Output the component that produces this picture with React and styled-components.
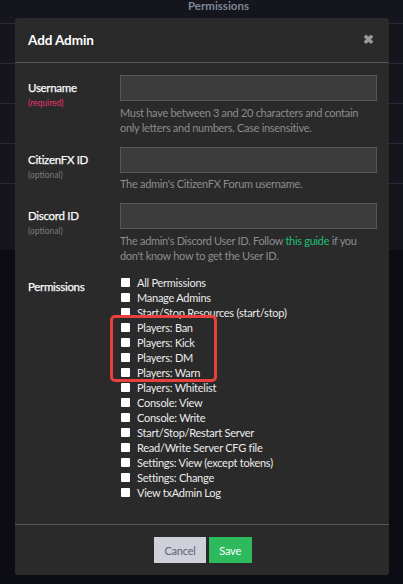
import React from "react";
import styled, { createGlobalStyle } from "styled-components";

const GlobalStyle = createGlobalStyle`
  html, body {
    margin: 0;
    padding: 0;
    background: #0c0c14;
    font-family: Lato, "Open Sans", sans-serif;
  }
`;

const Page = styled.div`
  position: relative;
  width: 403px;
  height: 584px;
  overflow: hidden;
  background: #0c0c14;
`;

const Table = styled.div`
  background: #15151e;
  height: 250px;
`;

const TableHead = styled.div`
  height: 24px;
  display: flex;
  justify-content: center;
  padding-left: 34px;
  color: #7d8797;
  font-size: 11.5px;
  font-weight: 700;
  line-height: 12px;
  border-bottom: 1px solid #2b2b36;
  box-sizing: border-box;
`;

const TableRow = styled.div`
  height: 40px;
  border-bottom: 1px solid #2b2b36;
  box-sizing: border-box;
`;

const Modal = styled.div`
  position: absolute;
  top: 18px;
  left: 15px;
  width: 374px;
  height: 557px;
  background: #2a2a2a;
  border-radius: 3px;
  display: flex;
  flex-direction: column;
  box-sizing: border-box;
  color: #e6e6e6;
`;

const Header = styled.div`
  height: 45px;
  display: flex;
  align-items: center;
  justify-content: space-between;
  padding: 0 13px 0 13px;
  border-bottom: 1px solid #555;
  box-sizing: border-box;
`;

const Title = styled.h5`
  margin: 0;
  font-size: 13.5px;
  font-weight: 700;
  letter-spacing: -0.1px;
  color: #fff;
`;

const Close = styled.span`
  color: #9a9a9a;
  font-size: 13px;
  font-weight: 700;
  line-height: 1;
  margin-top: -2px;
  margin-right: 2px;
`;

const Body = styled.div`
  flex: 1;
  padding: 12px 12px 0 13px;
  display: flex;
  flex-direction: column;
  gap: 12px;
`;

const Row = styled.div`
  display: grid;
  grid-template-columns: 92px 1fr;
`;

const LabelBox = styled.div`
  padding-top: ${(p) => p.$top || 5}px;
  display: flex;
  flex-direction: column;
`;

const Label = styled.span`
  font-size: 11.5px;
  letter-spacing: -0.3px;
  color: #fafafa;
  line-height: 15px;
  -webkit-text-stroke: 0.25px #fafafa;
`;

const Note = styled.span`
  font-size: 8.5px;
  line-height: 12px;
  margin-top: 2px;
  color: ${(p) => (p.$required ? "#e8336b" : "#7a7a7a")};
`;

const Input = styled.div`
  height: 26px;
  background: #3c3c3c;
  border: 1px solid #565656;
  box-sizing: border-box;
`;

const Help = styled.p`
  margin: 3.5px 0 0;
  font-size: 11px;
  letter-spacing: -0.3px;
  line-height: 15px;
  color: #8c8c8c;

  a {
    color: #1dbf78;
    text-decoration: none;
  }
`;

const Perms = styled.div`
  position: relative;
  display: flex;
  flex-direction: column;
`;

const Perm = styled.label`
  display: flex;
  align-items: center;
  gap: 7px;
  height: 15px;
  padding-left: 1px;
  font-size: 11px;
  letter-spacing: -0.25px;
  color: #ececec;
`;

const Box = styled.span`
  width: 9px;
  height: 9px;
  background: #fff;
  border-radius: 1px;
  flex: none;
`;

const Highlight = styled.div`
  position: absolute;
  left: -10px;
  top: 40px;
  width: 107px;
  height: 67px;
  border: 3px solid #e8403f;
  border-radius: 5px;
  box-sizing: border-box;
  pointer-events: none;
`;

const Footer = styled.div`
  height: 51px;
  border-top: 1px solid #555;
  display: flex;
  align-items: flex-start;
  justify-content: center;
  gap: 3px;
  padding-top: 12px;
  padding-left: 2px;
  box-sizing: border-box;
`;

const Button = styled.button`
  height: 26px;
  padding: 0 ${(p) => (p.$save ? 10.5 : 10)}px;
  border: none;
  border-radius: 0;
  font-family: inherit;
  font-size: 11px;
  letter-spacing: -0.2px;
  background: ${(p) => (p.$save ? "#2dba5c" : "#ced1da")};
  color: ${(p) => (p.$save ? "#fff" : "#5c6370")};
`;

const perms = [
  "All Permissions",
  "Manage Admins",
  "Start/Stop Resources (start/stop)",
  "Players: Ban",
  "Players: Kick",
  "Players: DM",
  "Players: Warn",
  "Players: Whitelist",
  "Console: View",
  "Console: Write",
  "Start/Stop/Restart Server",
  "Read/Write Server CFG file",
  "Settings: View (except tokens)",
  "Settings: Change",
  "View txAdmin Log",
];

export default function App() {
  return (
    <Page>
      <GlobalStyle />
      <Table>
        <TableHead>Permissions</TableHead>
        {[0, 1, 2, 3].map((i) => (
          <TableRow key={i} />
        ))}
      </Table>

      <Modal>
        <Header>
          <Title>Add Admin</Title>
          <Close>✖</Close>
        </Header>
        <Body>
          <Row>
            <LabelBox>
              <Label>Username</Label>
              <Note $required>(required)</Note>
            </LabelBox>
            <div>
              <Input />
              <Help>
                Must have between 3 and 20 characters and contain only letters
                and numbers. Case insensitive.
              </Help>
            </div>
          </Row>
          <Row>
            <LabelBox>
              <Label>CitizenFX ID</Label>
              <Note>(optional)</Note>
            </LabelBox>
            <div>
              <Input />
              <Help>The admin's CitizenFX Forum username.</Help>
            </div>
          </Row>
          <Row>
            <LabelBox>
              <Label>Discord ID</Label>
              <Note>(optional)</Note>
            </LabelBox>
            <div>
              <Input />
              <Help>
                The admin's Discord User ID. Follow <a href="#">this guide</a> if
                you don't know how to get the User ID.
              </Help>
            </div>
          </Row>
          <Row>
            <LabelBox $top={4}>
              <Label>Permissions</Label>
            </LabelBox>
            <Perms>
              {perms.map((p) => (
                <Perm key={p}>
                  <Box />
                  {p}
                </Perm>
              ))}
              <Highlight />
            </Perms>
          </Row>
        </Body>
        <Footer>
          <Button>Cancel</Button>
          <Button $save>Save</Button>
        </Footer>
      </Modal>
    </Page>
  );
}
